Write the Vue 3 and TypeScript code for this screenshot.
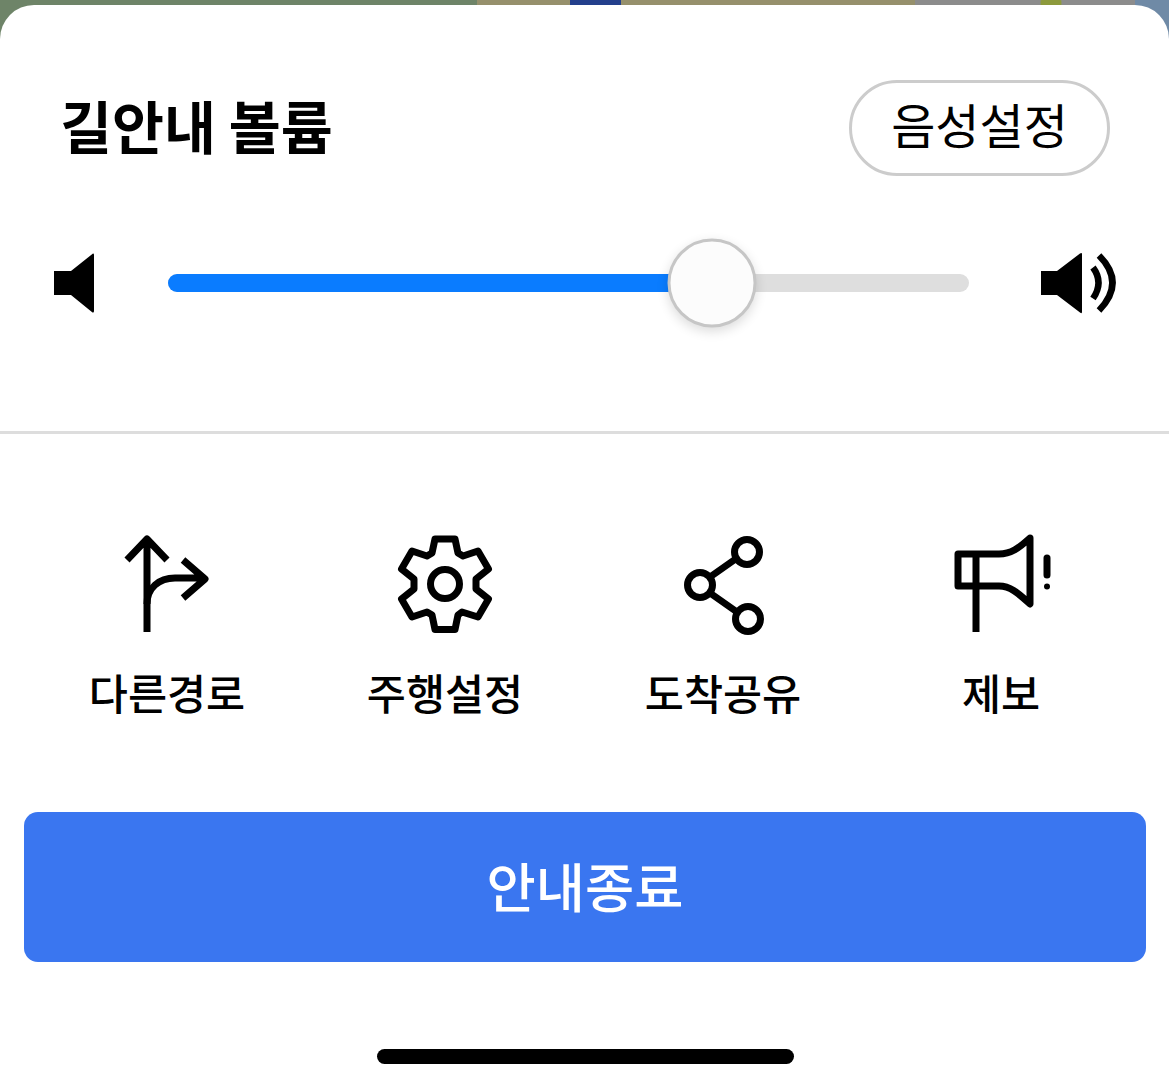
<template>
  <div class="screen">
    <div class="sheet">
      <header class="head">
        <h1 class="title">길안내 볼륨</h1>
        <button class="voice-btn">음성설정</button>
      </header>

      <div class="volume">
        <svg class="speaker" width="40" height="60" viewBox="0 0 40 60">
          <path d="M0 18H17L39 0.500Q40 0 40 2V58Q40 60 38.500 59.500L17 42H0Z" />
        </svg>
        <div class="track">
          <div class="fill" :style="{ width: volume + '%' }"></div>
          <div class="thumb" :style="{ left: volume + '%' }"></div>
        </div>
        <svg class="speaker-loud" width="76" height="62" viewBox="0 0 76 62">
          <path d="M0 19H16L39 1.500Q41 0.500 41 2V60Q41 62 39 60.500L16 43H0Z" />
          <path class="wave" d="M52 15.500Q63 30.500 52 46.500" />
          <path class="wave" d="M58 3.500Q85 30.500 58 58.500" />
        </svg>
      </div>

      <div class="divider"></div>

      <nav class="actions">
        <div class="action">
          <svg class="icon" width="100" height="105" viewBox="0 0 100 105">
            <path d="M30 102V9M10 30L30 9L50 30" />
            <path d="M30 74C30 58 42 48 58 48H88M66 30L88 49L66 68" />
          </svg>
          <span class="label">다른경로</span>
        </div>
        <div class="action">
          <svg class="icon" width="100" height="105" viewBox="0 0 100 105">
            <path d="M40 9H60L63 23L68 26L83 21L93.500 39L81 49V59L93.500 69L83 87L67 82L63 85L60 99.500H40L37 85L32 82L17 87L6.500 69L19 59V49L6.500 39L17 21L32 26L37 23Z" />
            <circle cx="50" cy="54" r="14.500" />
          </svg>
          <span class="label">주행설정</span>
        </div>
        <div class="action">
          <svg class="icon" width="100" height="105" viewBox="0 0 100 105">
            <circle cx="74" cy="22" r="12.500" />
            <circle cx="27" cy="55" r="12.500" />
            <circle cx="75" cy="89" r="12.500" />
            <path d="M37 47L64 28M37 63L64 82" />
          </svg>
          <span class="label">도착공유</span>
        </div>
        <div class="action">
          <svg class="icon" width="100" height="105" viewBox="0 0 100 105">
            <path d="M25 102V24M48 24H7V56H48C60 56 68 64 79 74V8C68 18 60 24 48 24Z" />
            <path class="bang" d="M96 28V45" />
            <circle class="dot" cx="96" cy="56.500" r="3" />
          </svg>
          <span class="label">제보</span>
        </div>
      </nav>

      <div class="finish-wrap">
        <button class="finish">안내종료</button>
      </div>

      <div class="home-bar"></div>
    </div>
  </div>
</template>

<script setup lang="ts">
const volume = 67.9
</script>

<style scoped>
.screen {
  width: 1169px;
  height: 1087px;
  overflow: hidden;
  background:
    radial-gradient(circle 16px at 1051px 3px, #8d9a3c 0 60%, transparent 70%),
    linear-gradient(90deg, #6e8468 0 477px, #96906c 477px 570px, #233f8c 570px 621px, #96906c 621px 915px, #8c8c8c 915px 1135px, #6f8aa6 1135px);
  font-family: "Noto Sans CJK KR", "Noto Sans", sans-serif;
  color: #000;
}

.sheet {
  height: 1082px;
  margin-top: 5px;
  background: #fff;
  border-radius: 34px 34px 0 0;
  display: flex;
  flex-direction: column;
}

.head {
  display: flex;
  align-items: center;
  justify-content: space-between;
  padding: 75px 59px 0 60px;
}

.title {
  margin: 0 0 8px;
  font-size: 56.500px;
  font-weight: 700;
  line-height: 88px;
}

.voice-btn {
  width: 261px;
  height: 96px;
  padding: 0 0 11px;
  border: 3px solid #cccccc;
  border-radius: 48px;
  background: #fff;
  color: #000;
  font-family: inherit;
  font-size: 48px;
  font-weight: 400;
  line-height: 1;
}

.volume {
  display: flex;
  align-items: center;
  height: 89px;
  margin-top: 62px;
  padding: 0 52px 0 54px;
}

.speaker {
  flex: none;
  margin-right: 74px;
}

.speaker-loud {
  flex: none;
  margin-left: 72px;
  overflow: visible;
}

.speaker-loud .wave {
  fill: none;
  stroke: #000;
  stroke-width: 6.500;
}

.track {
  position: relative;
  flex: 1;
  height: 18px;
  border-radius: 9px;
  background: #dedede;
}

.fill {
  height: 100%;
  border-radius: 9px 0 0 9px;
  background: #0a7cff;
}

.thumb {
  position: absolute;
  top: 50%;
  width: 89px;
  height: 89px;
  box-sizing: border-box;
  border: 3px solid #c6c6c6;
  border-radius: 50%;
  background: #fcfcfc;
  transform: translate(-50%, -50%);
  box-shadow: 0 4px 12px rgba(0, 0, 0, 0.14);
}

.divider {
  height: 3px;
  margin-top: 104px;
  background: #dddddd;
}

.actions {
  display: grid;
  grid-template-columns: repeat(4, 278px);
  padding: 96px 0 0 28px;
}

.action {
  display: flex;
  flex-direction: column;
  align-items: center;
}

.icon {
  fill: none;
  stroke: #000;
  stroke-width: 7;
  stroke-linejoin: round;
  overflow: visible;
}

.icon .bang {
  stroke-linecap: round;
}

.icon .dot {
  fill: #000;
  stroke: none;
}

.label {
  margin-top: 26px;
  font-size: 42.500px;
  font-weight: 500;
  line-height: 62px;
}

.finish-wrap {
  padding: 89px 23px 0 24px;
}

.finish {
  display: block;
  width: 100%;
  height: 150px;
  padding: 0 0 6px;
  border: 0;
  border-radius: 14px;
  background: #3a76f0;
  color: #fff;
  font-family: inherit;
  font-size: 53.500px;
  font-weight: 500;
}

.home-bar {
  width: 417px;
  height: 15px;
  margin: 87px 0 0 377px;
  border-radius: 8px;
  background: #000;
}
</style>

<style>
html,
body {
  margin: 0;
  background: #fff;
}
</style>
